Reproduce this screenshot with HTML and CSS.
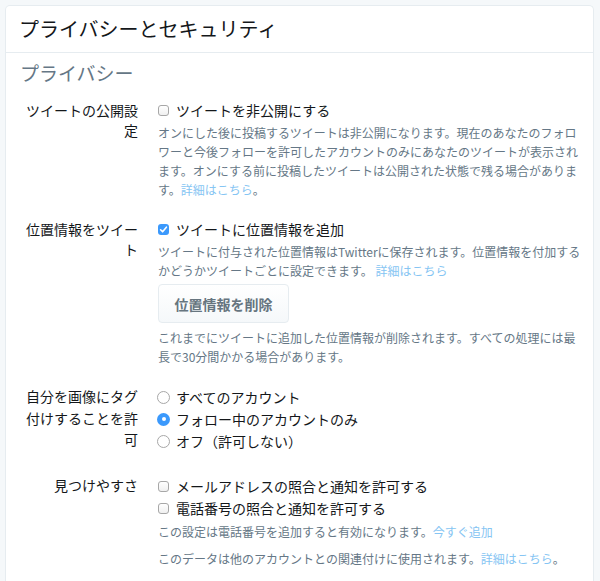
FILE: index.html
```html
<!DOCTYPE html>
<html lang="ja">
<head>
<meta charset="UTF-8">
<meta name="viewport" content="width=device-width, initial-scale=1.0">
<title>プライバシーとセキュリティ</title>
<link rel="stylesheet" href="styles.css">
</head>
<body>
  <div class="card">
    <div class="card-header">
      <h1>プライバシーとセキュリティ</h1>
    </div>

    <div class="section">
      <h2>プライバシー</h2>

      <!-- tweet privacy -->
      <div class="row">
        <div class="row-label">ツイートの公開設定</div>
        <div class="row-body">
          <div class="option"><span class="box"></span>ツイートを非公開にする</div>
          <p class="note">オンにした後に投稿するツイートは非公開になります。現在のあなたのフォロワーと今後フォローを許可したアカウントのみにあなたのツイートが表示されます。オンにする前に投稿したツイートは公開された状態で残る場合があります。<a href="#">詳細はこちら</a>。</p>
        </div>
      </div>

      <!-- location -->
      <div class="row">
        <div class="row-label">位置情報をツイート</div>
        <div class="row-body">
          <div class="option">
            <span class="box checked">
              <svg width="9" height="9" viewBox="0 0 9 9"><path d="M1.6 4.8 L3.6 6.8 L7.4 2.2" fill="none" stroke="#fff" stroke-width="1.6" stroke-linecap="round" stroke-linejoin="round"/></svg>
            </span>ツイートに位置情報を追加
          </div>
          <p class="note">ツイートに付与された位置情報はTwitterに保存されます。位置情報を付加するかどうかツイートごとに設定できます。 <a href="#">詳細はこちら</a></p>
          <button class="btn">位置情報を削除</button>
          <p class="note after-btn">これまでにツイートに追加した位置情報が削除されます。すべての処理には最長で30分間かかる場合があります。</p>
        </div>
      </div>

      <!-- photo tagging -->
      <div class="row row-radios">
        <div class="row-label tall">自分を画像にタグ付けすることを許可</div>
        <div class="row-body">
          <div class="option radio-opt"><span class="radio"></span>すべてのアカウント</div>
          <div class="option radio-opt"><span class="radio on"></span>フォロー中のアカウントのみ</div>
          <div class="option radio-opt"><span class="radio"></span>オフ（許可しない）</div>
        </div>
      </div>

      <!-- discoverability -->
      <div class="row">
        <div class="row-label">見つけやすさ</div>
        <div class="row-body">
          <div class="option radio-opt"><span class="box"></span>メールアドレスの照合と通知を許可する</div>
          <div class="option radio-opt"><span class="box"></span>電話番号の照合と通知を許可する</div>
          <p class="note">この設定は電話番号を追加すると有効になります。<a href="#">今すぐ追加</a></p>
          <p class="note second">このデータは他のアカウントとの関連付けに使用されます。<a href="#">詳細はこちら</a>。</p>
        </div>
      </div>
    </div>
  </div>
</body>
</html>
```

FILE: styles.css
```css
body {
  margin: 0;
  padding: 5px 6px 0 5px;
  background-color: #f5f8fa;
  font-family: "Noto Sans CJK JP", "Noto Sans", sans-serif;
  color: #14171a;
  overflow: hidden;
  height: 576px;
}

.card {
  background-color: #fff;
  border: 1px solid #e6ecf0;
  border-bottom: none;
  border-radius: 5px 5px 0 0;
  height: 100%;
}

.card-header {
  border-bottom: 1px solid #e6ecf0;
  padding: 0 13px;
}

.card-header h1 {
  margin: 0;
  font-size: 20px;
  font-weight: normal;
  line-height: 46px;
}

.section {
  padding: 0 12px 0 14px;
}

.section h2 {
  margin: 9px 0 16px 0;
  font-size: 19px;
  font-weight: normal;
  line-height: 22px;
  color: #657786;
}

.row {
  display: grid;
  grid-template-columns: 118px 424px;
  column-gap: 20px;
  margin-bottom: 20px;
}

.row.row-radios {
  margin-bottom: 23px;
}

.row-label {
  text-align: right;
  font-size: 14px;
  line-height: 20px;
}

.row-label.tall {
  line-height: 21.5px;
}

.option {
  display: flex;
  align-items: center;
  font-size: 14px;
  line-height: 20px;
}

.radio-opt {
  line-height: 22px;
}

.box {
  width: 11px;
  height: 11px;
  box-sizing: border-box;
  border: 1px solid #a7a7a7;
  border-radius: 3px;
  background: linear-gradient(#fff, #f0f0f0);
  margin-right: 7px;
  display: flex;
  align-items: center;
  justify-content: center;
}

.box.checked {
  border: none;
  background: #3b99fc;
}

.radio {
  width: 13px;
  height: 13px;
  box-sizing: border-box;
  border: 1px solid #a7a7a7;
  border-radius: 50%;
  background: #fff;
  margin-left: -1px;
  margin-right: 6px;
  display: flex;
  align-items: center;
  justify-content: center;
}

.radio.on {
  border: none;
  background: #3b99fc;
}

.radio.on::after {
  content: '';
  width: 4px;
  height: 4px;
  border-radius: 50%;
  background: #fff;
}

.note {
  margin: 3px 0 0 0;
  font-size: 12px;
  line-height: 19px;
  color: #657786;
}

.note a {
  color: #86c5f3;
  text-decoration: none;
}

.note.after-btn {
  margin-top: 5px;
}

.note.second {
  margin-top: 8px;
}

.btn {
  display: block;
  margin-top: 4px;
  width: 131px;
  height: 39px;
  font-family: inherit;
  font-size: 14px;
  font-weight: bold;
  color: #66757f;
  background: linear-gradient(#fff, #f5f8fa);
  border: 1px solid #e6ecf0;
  border-radius: 4px;
  padding: 0;
}
```
